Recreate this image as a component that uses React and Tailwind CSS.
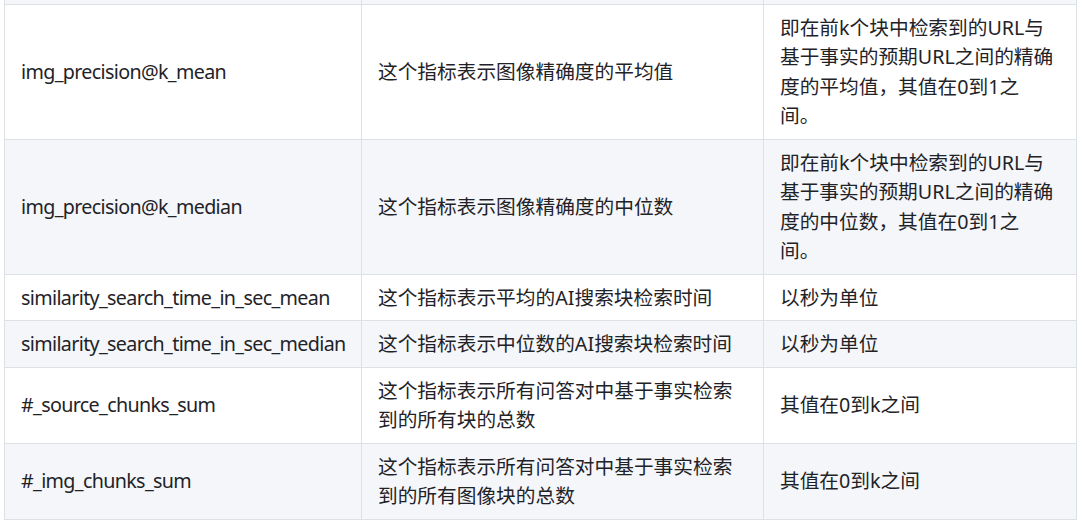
import React from 'react';

const rows = [
  {
    name: 'img_precision@k_mean',
    desc: ['这个指标表示图像精确度的平均值'],
    note: ['即在前k个块中检索到的URL与', '基于事实的预期URL之间的精确', '度的平均值，其值在0到1之', '间。'],
    h: 'h-[133px]',
  },
  {
    name: 'img_precision@k_median',
    desc: ['这个指标表示图像精确度的中位数'],
    note: ['即在前k个块中检索到的URL与', '基于事实的预期URL之间的精确', '度的中位数，其值在0到1之', '间。'],
    h: 'h-[135px]',
  },
  {
    name: 'similarity_search_time_in_sec_mean',
    desc: ['这个指标表示平均的AI搜索块检索时间'],
    note: ['以秒为单位'],
    h: 'h-[46px]',
  },
  {
    name: 'similarity_search_time_in_sec_median',
    desc: ['这个指标表示中位数的AI搜索块检索时间'],
    note: ['以秒为单位'],
    h: 'h-[45px]',
  },
  {
    name: '#_source_chunks_sum',
    desc: ['这个指标表示所有问答对中基于事实检索', '到的所有块的总数'],
    note: ['其值在0到k之间'],
    h: 'h-[75px]',
  },
  {
    name: '#_img_chunks_sum',
    desc: ['这个指标表示所有问答对中基于事实检索', '到的所有图像块的总数'],
    note: ['其值在0到k之间'],
    h: 'h-[75px]',
  },
];

// render lines with explicit breaks so wrapping matches the source
const Lines = ({ lines }) =>
  lines.map((l, i) => (
    <React.Fragment key={i}>
      {l}
      {i < lines.length - 1 && <br />}
    </React.Fragment>
  ));

export default function App() {
  return (
    <div
      className="w-[1080px] h-[522px] bg-white pl-[4px] overflow-hidden text-[#1f2328]"
      style={{ fontFamily: '"Noto Sans", "Noto Sans CJK SC", sans-serif' }}
    >
      <table className="table-fixed border-collapse w-[1072px] text-[19.7px] leading-[29.5px]">
        <colgroup>
          <col className="w-[357px]" />
          <col className="w-[402px]" />
          <col className="w-[313px]" />
        </colgroup>
        <tbody>
          {/* bottom edge of the previous row */}
          <tr className="h-[4px] bg-[#f4f6f9]">
            <td className="p-0 border border-t-0 border-[#dde1e6]" />
            <td className="p-0 border border-t-0 border-[#dde1e6]" />
            <td className="p-0 border border-t-0 border-[#dde1e6]" />
          </tr>
          {rows.map((r, i) => (
            <tr key={r.name} className={`${r.h} ${i % 2 === 1 ? 'bg-[#f4f6f9]' : 'bg-white'}`}>
              <td className="border border-[#dde1e6] px-4 py-2 align-middle whitespace-nowrap tracking-[-0.65px]">
                {r.name}
              </td>
              <td className="border border-[#dde1e6] px-4 py-2 align-middle whitespace-nowrap">
                <Lines lines={r.desc} />
              </td>
              <td className="border border-[#dde1e6] px-4 py-2 align-middle whitespace-nowrap">
                <Lines lines={r.note} />
              </td>
            </tr>
          ))}
        </tbody>
      </table>
    </div>
  );
}
